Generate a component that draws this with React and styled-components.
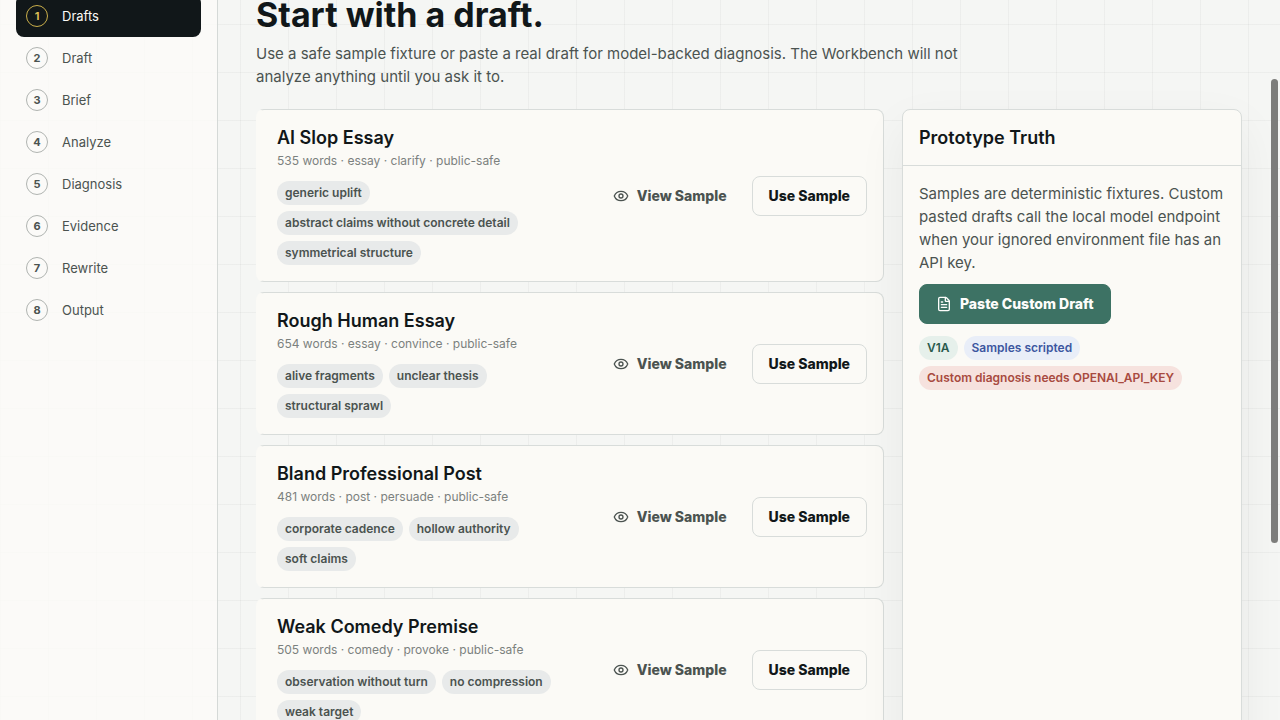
import React from "react";
import styled, { createGlobalStyle, css } from "styled-components";
import { Eye, FileText } from "lucide-react";

const GlobalStyle = createGlobalStyle`
  *, *::before, *::after { box-sizing: border-box; }
  body {
    margin: 0;
    color: #111719;
    font-family: Inter, "Liberation Sans", sans-serif;
    background-color: #f5f6f4;
    background-image:
      linear-gradient(90deg, rgba(17, 23, 25, 0.035) 1px, transparent 1px),
      linear-gradient(rgba(17, 23, 25, 0.035) 1px, transparent 1px);
    background-size: 48px 48px;
    background-position: 0 24px;
  }
  h1, h2, p, ol, ul { margin: 0; padding: 0; }
  button { font: inherit; cursor: pointer; }
`;

const Shell = styled.div`
  display: grid;
  grid-template-columns: 218px minmax(0, 1fr);
  height: 100vh;
  overflow: hidden;
`;

const Sidebar = styled.nav`
  padding: 0 16px;
  background: rgba(251, 250, 248, 0.84);
  border-right: 1px solid #d5d9d7;
`;

const Steps = styled.ol`
  display: grid;
  list-style: none;
  margin-top: -5px;
`;

const StepLink = styled.a`
  display: flex;
  align-items: center;
  gap: 14px;
  height: 42px;
  padding: 0 10px;
  border-radius: 8px;
  font-size: 13px;
  line-height: 20px;
  text-decoration: none;
  color: ${(p) => (p.$active ? "#fbfaf6" : "#4b5350")};
  background: ${(p) => (p.$active ? "#111719" : "transparent")};
`;

const StepNumber = styled.span`
  display: grid;
  place-items: center;
  width: 22px;
  height: 22px;
  border: 1px solid ${(p) => (p.$active ? "#c9ae4a" : "#b0b4b1")};
  border-radius: 50%;
  color: ${(p) => (p.$active ? "#d8bb55" : "#4b5350")};
  font-size: 11px;
  line-height: 14px;
  font-weight: 700;
`;

const Main = styled.main`
  min-width: 0;
  padding: 0 38px;
`;

const PageHeader = styled.header`
  max-width: 720px;
  margin-bottom: 21px;
`;

const PageTitle = styled.h1`
  font-size: 34px;
  line-height: 30px;
  font-weight: 700;
`;

const Lead = styled.p`
  margin-top: 12px;
  font-size: 15px;
  line-height: 23px;
  color: #4b5350;
`;

const Columns = styled.div`
  display: grid;
  grid-template-columns: minmax(0, 1fr) 340px;
  gap: 18px;
`;

const SampleList = styled.ul`
  display: grid;
  align-content: start;
  gap: 10px;
  list-style: none;
`;

const SampleCard = styled.li`
  display: grid;
  grid-template-columns: minmax(0, 1fr) auto;
  align-items: center;
  gap: 18px;
  padding: 16px;
  background: #fbfaf6;
  border: 1px solid #d8dcda;
  border-left: 5px solid transparent;
  border-radius: 8px;
`;

const CardTitle = styled.h2`
  font-size: 18px;
  line-height: 23px;
  font-weight: 600;
`;

const Meta = styled.p`
  margin-top: 3px;
  font-size: 12px;
  line-height: 18px;
  color: #7b817e;
`;

const Tags = styled.div`
  display: flex;
  flex-wrap: wrap;
  gap: 6px;
  margin-top: ${(p) => p.$top}px;
`;

const tones = {
  neutral: css`background: #e8eaea; color: #4b5350;`,
  green: css`background: #e6f0eb; color: #2a5a4d;`,
  blue: css`background: #e9eef8; color: #3c56a0;`,
  red: css`background: #f6e2de; color: #a84a40;`,
};

const Tag = styled.span`
  padding: 0 8px;
  border-radius: 12px;
  font-size: 12px;
  line-height: 24px;
  font-weight: 600;
  ${(p) => tones[p.$tone || "neutral"]}
`;

const Actions = styled.div`
  display: flex;
  gap: 8px;
`;

const variants = {
  outline: css`background: #fbfaf6; border-color: #d8dcda; color: #111719;`,
  ghost: css`background: transparent; color: #4b5350;`,
  primary: css`background: #3d7264; border-color: #3d7264; color: #fdfdfb;`,
};

const Button = styled.button`
  display: inline-flex;
  align-items: center;
  justify-content: center;
  gap: 8px;
  height: 40px;
  padding: 0 16px;
  border: 1px solid transparent;
  border-radius: 8px;
  font-size: 14px;
  line-height: 20px;
  font-weight: 800;
  white-space: nowrap;
  ${(p) => variants[p.$variant]}
`;

const Panel = styled.aside`
  min-height: 100vh;
  background: #fbfaf6;
  border: 1px solid #d8dcda;
  border-radius: 8px;
  box-shadow: 0 18px 50px rgba(17, 23, 25, 0.06);
`;

const PanelHeader = styled.div`
  padding: 16px;
  border-bottom: 1px solid #d8dcda;
`;

const PanelBody = styled.div`
  padding: 16px;
`;

const PanelText = styled.p`
  margin-bottom: 10px;
  font-size: 15px;
  line-height: 23px;
  color: #4b5350;
`;

const ScrollThumb = styled.div`
  position: fixed;
  top: 11vh;
  right: 2px;
  width: 7px;
  height: 464px;
  border-radius: 4px;
  background: #7d7d7b;
`;

const steps = ["Drafts", "Draft", "Brief", "Analyze", "Diagnosis", "Evidence", "Rewrite", "Output"];

const samples = [
  {
    title: "AI Slop Essay",
    meta: "535 words · essay · clarify · public-safe",
    tags: ["generic uplift", "abstract claims without concrete detail", "symmetrical structure"],
  },
  {
    title: "Rough Human Essay",
    meta: "654 words · essay · convince · public-safe",
    tags: ["alive fragments", "unclear thesis", "structural sprawl"],
  },
  {
    title: "Bland Professional Post",
    meta: "481 words · post · persuade · public-safe",
    tags: ["corporate cadence", "hollow authority", "soft claims"],
  },
  {
    title: "Weak Comedy Premise",
    meta: "505 words · comedy · provoke · public-safe",
    tags: ["observation without turn", "no compression", "weak target"],
  },
];

export default function App() {
  return (
    <>
      <GlobalStyle />
      <Shell>
        <Sidebar aria-label="Workflow">
          <Steps>
            {steps.map((label, i) => (
              <li key={label}>
                <StepLink href="#" $active={i === 0} aria-current={i === 0 ? "step" : undefined}>
                  <StepNumber $active={i === 0}>{i + 1}</StepNumber>
                  {label}
                </StepLink>
              </li>
            ))}
          </Steps>
        </Sidebar>
        <Main>
          <PageHeader>
            <PageTitle>Start with a draft.</PageTitle>
            <Lead>
              Use a safe sample fixture or paste a real draft for model-backed diagnosis. The Workbench
              will not analyze anything until you ask it to.
            </Lead>
          </PageHeader>
          <Columns>
            <SampleList>
              {samples.map((s) => (
                <SampleCard key={s.title}>
                  <div>
                    <CardTitle>{s.title}</CardTitle>
                    <Meta>{s.meta}</Meta>
                    <Tags $top={11}>
                      {s.tags.map((t) => (
                        <Tag key={t}>{t}</Tag>
                      ))}
                    </Tags>
                  </div>
                  <Actions>
                    <Button type="button" $variant="ghost">
                      <Eye size={16} aria-hidden="true" />
                      View Sample
                    </Button>
                    <Button type="button" $variant="outline">Use Sample</Button>
                  </Actions>
                </SampleCard>
              ))}
            </SampleList>
            <Panel>
              <PanelHeader>
                <CardTitle>Prototype Truth</CardTitle>
              </PanelHeader>
              <PanelBody>
                <PanelText>
                  Samples are deterministic fixtures. Custom pasted drafts call the local model endpoint
                  when your ignored environment file has an API key.
                </PanelText>
                <Button type="button" $variant="primary">
                  <FileText size={16} aria-hidden="true" />
                  Paste Custom Draft
                </Button>
                <Tags $top={12}>
                  <Tag $tone="green">V1A</Tag>
                  <Tag $tone="blue">Samples scripted</Tag>
                  <Tag $tone="red">Custom diagnosis needs OPENAI_API_KEY</Tag>
                </Tags>
              </PanelBody>
            </Panel>
          </Columns>
        </Main>
      </Shell>
      <ScrollThumb aria-hidden="true" />
    </>
  );
}
